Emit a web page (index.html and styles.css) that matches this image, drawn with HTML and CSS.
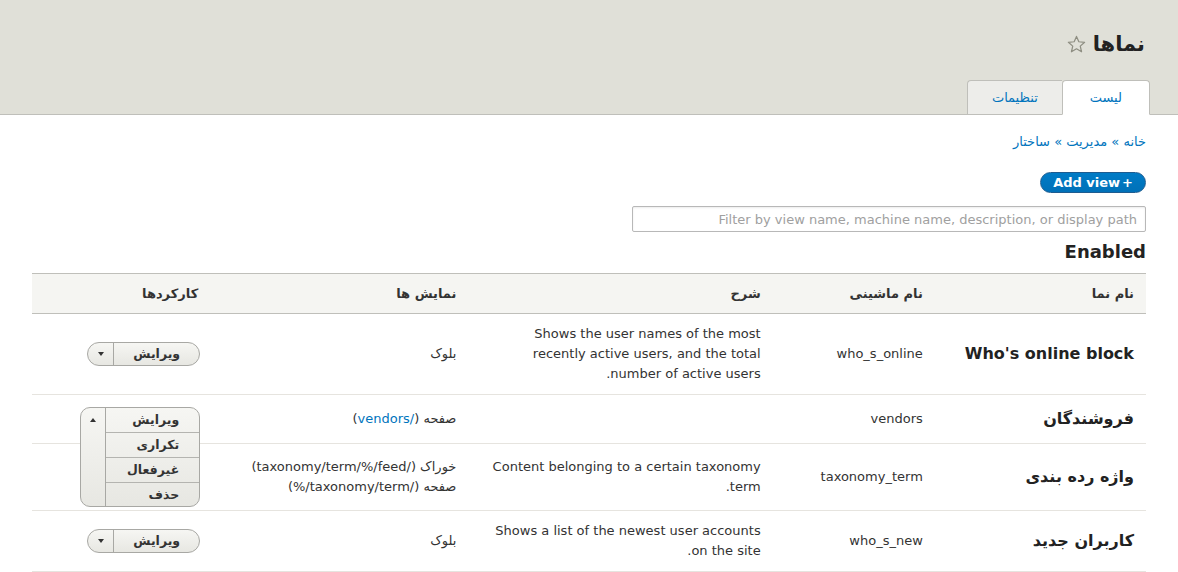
FILE: index.html
```html
<!DOCTYPE html>
<html lang="fa" dir="rtl">
<head>
<meta charset="utf-8">
<title>نماها</title>
<link rel="stylesheet" href="styles.css">
</head>
<body>
<header class="page-header">
  <div class="title-row">
    <h1 class="page-title">نماها</h1>
    <svg class="star" width="19" height="19" viewBox="0 0 20 20" aria-hidden="true"><path d="M10 1.5l2.47 5.6 6.08.56-4.6 4.02 1.36 5.96L10 14.530l-5.31 3.11 1.36-5.96-4.6-4.02 6.08-.56z" fill="none" stroke="#8e8e82" stroke-width="1.3" stroke-linejoin="round"/></svg>
  </div>
  <nav class="tabs">
    <a class="tab tab-active" href="#">لیست</a>
    <a class="tab" href="#">تنظیمات</a>
  </nav>
</header>
<main class="content">
  <div class="breadcrumb"><a href="#">خانه</a> » <a href="#">مدیریت</a> » <a href="#">ساختار</a></div>
  <div class="actions"><a class="button-primary" href="#"><span class="plus">+</span>Add view</a></div>
  <div class="filter-row"><input class="filter" type="search" placeholder="Filter by view name, machine name, description, or display path"></div>
  <h2 class="section-title">Enabled</h2>
  <table class="views-table">
    <colgroup>
      <col class="c-title"><col class="c-machine"><col class="c-desc"><col class="c-displays"><col class="c-ops">
    </colgroup>
    <thead>
      <tr><th>نام نما</th><th>نام ماشینی</th><th>شرح</th><th>نمایش ها</th><th>کارکردها</th></tr>
    </thead>
    <tbody>
      <tr class="r1">
        <td class="view-title">Who's online block</td>
        <td>who_s_online</td>
        <td><div class="desc">Shows the user names of the most recently active users, and the total number of active users.</div></td>
        <td>بلوک</td>
        <td class="ops"><div class="dropbutton"><a class="db-main" href="#">ویرایش</a><span class="db-toggle"><span class="tri tri-down"></span></span></div></td>
      </tr>
      <tr class="r2">
        <td class="view-title">فروشندگان</td>
        <td>vendors</td>
        <td><div class="desc"></div></td>
        <td>صفحه (<a href="#">/vendors</a>)</td>
        <td class="ops">
          <div class="db-holder">
            <div class="dropbutton dropbutton-open">
              <ul class="db-list">
                <li><a href="#">ویرایش</a></li>
                <li><a href="#">تکراری</a></li>
                <li><a href="#">غیرفعال</a></li>
                <li><a href="#">حذف</a></li>
              </ul>
              <span class="db-toggle db-toggle-open"><span class="tri tri-up"></span></span>
            </div>
          </div>
        </td>
      </tr>
      <tr class="r3">
        <td class="view-title">واژه رده بندی</td>
        <td>taxonomy_term</td>
        <td><div class="desc">Content belonging to a certain taxonomy term.</div></td>
        <td>خوراک (/taxonomy/term/%/feed)<br>صفحه (/taxonomy/term/%)</td>
        <td class="ops"></td>
      </tr>
      <tr class="r4">
        <td class="view-title">کاربران جدید</td>
        <td>who_s_new</td>
        <td><div class="desc">Shows a list of the newest user accounts on the site.</div></td>
        <td>بلوک</td>
        <td class="ops"><div class="dropbutton"><a class="db-main" href="#">ویرایش</a><span class="db-toggle"><span class="tri tri-down"></span></span></div></td>
      </tr>
    </tbody>
  </table>
</main>
</body>
</html>
```
FILE: styles.css
```css
html, body {
  margin: 0;
  padding: 0;
}
body {
  direction: rtl;
  font-family: "DejaVu Sans", "Noto Sans", sans-serif;
  font-size: 13px;
  line-height: 20px;
  color: #333;
  background: #fff;
}
a {
  color: #0074bd;
  text-decoration: none;
}

/* Header */
.page-header {
  background: #e0e0d8;
  border-bottom: 1px solid #bfbfba;
  height: 115px;
  box-sizing: border-box;
  padding: 30px 28px 0 28px;
  display: flex;
  flex-direction: column;
}
.title-row {
  display: flex;
  align-items: center;
  gap: 7px;
  padding-right: 5px;
  height: 28px;
}
.page-title {
  margin: 0;
  font-size: 21px;
  line-height: 28px;
  font-weight: bold;
  color: #222;
}
.star {
  display: block;
}
.tabs {
  margin-top: auto;
  display: flex;
  margin-bottom: -1px;
}
.tab {
  height: 35px;
  box-sizing: border-box;
  line-height: 33px;
  padding: 0 24px;
  background: #ededea;
  border: 1px solid #bfbfba;
  border-radius: 4px 4px 0 0;
  color: #0074bd;
}
.tab + .tab {
  border-right: none;
  border-radius: 4px 0 0 0;
}
.tab-active {
  background: #fff;
  border-bottom-color: #fff;
  padding: 0 27px;
  border-radius: 4px 4px 0 0;
}

/* Content */
.content {
  padding: 17px 32px 0 32px;
}
.breadcrumb {
  color: #0074bd;
  line-height: 20px;
}
.actions {
  margin-top: 20px;
  display: flex;
}
.button-primary {
  display: inline-flex;
  align-items: center;
  height: 21px;
  padding: 0 12px;
  border-radius: 12px;
  background: linear-gradient(to bottom, #007bc6, #0071b8);
  border: 1px solid #1e5c90;
  box-sizing: border-box;
  color: #fff;
  font-weight: bold;
  font-size: 13px;
  line-height: 19px;
}
.plus {
  font-weight: bold;
  margin-left: 2px;
}
.filter-row {
  margin-top: 13px;
  display: flex;
}
.filter {
  width: 514px;
  height: 26px;
  box-sizing: border-box;
  border: 1px solid #b8b8b8;
  border-radius: 2px;
  padding: 0 8px;
  font-family: "DejaVu Sans", sans-serif;
  font-size: 13px;
  direction: rtl;
  background: #fff;
  box-shadow: inset 0 1px 2px rgba(0,0,0,0.08);
}
.filter::placeholder {
  color: #a0a0a0;
}
.section-title {
  margin: 9px 0 10px;
  font-size: 18px;
  line-height: 22px;
  font-weight: bold;
  color: #222;
}

/* Table */
.views-table {
  width: 100%;
  border-collapse: collapse;
  table-layout: fixed;
  border-top: 1px solid #bfbfba;
}
.c-title { width: 211px; }
.c-machine { width: 162px; }
.c-desc { width: 304px; }
.c-displays { width: 258px; }
.c-ops { width: 178px; }
.views-table thead tr {
  background: #f5f5f2;
  border-bottom: 1px solid #bfbfba;
}
.views-table th {
  height: 40px;
  box-sizing: border-box;
  padding: 0 12px;
  text-align: right;
  font-weight: bold;
  font-size: 13px;
  color: #333;
}
.views-table td {
  padding: 10px 12px;
  text-align: right;
  vertical-align: middle;
  border-bottom: 1px solid #e6e4df;
}
.views-table td.ops {
  padding-right: 10px;
}
.r2 td { height: 48px; padding-top: 0; padding-bottom: 0; }
.r3 td { height: 66px; padding-top: 0; padding-bottom: 0; }
.r4 td { height: 60px; padding-top: 0; padding-bottom: 0; }
.view-title {
  font-size: 16px;
  font-weight: bold;
  color: #222;
}
.desc {
  max-width: 270px;
}

/* Dropbutton */
.dropbutton {
  display: inline-flex;
  height: 24px;
  box-sizing: border-box;
  border: 1px solid #a8a8a4;
  border-radius: 12px;
  overflow: hidden;
  background: linear-gradient(to bottom, #f6f6f3, #e7e7e2);
  vertical-align: middle;
}
.db-main {
  width: 85px;
  line-height: 22px;
  font-weight: bold;
  font-size: 12.5px;
  color: #333;
  text-align: center;
}
.db-toggle {
  width: 25px;
  border-right: 1px solid #a8a8a4;
  display: flex;
  align-items: center;
  justify-content: center;
}
.tri {
  width: 0;
  height: 0;
  border-left: 3.5px solid transparent;
  border-right: 3.5px solid transparent;
}
.tri-down {
  border-top: 4px solid #333;
}
.tri-up {
  border-bottom: 4px solid #333;
}
.db-holder {
  position: relative;
  height: 25px;
}
.dropbutton-open {
  position: absolute;
  top: 0;
  right: 0;
  height: auto;
  border-radius: 10px;
  z-index: 2;
}
.db-list {
  list-style: none;
  margin: 0;
  padding: 0;
}
.db-list li {
  height: 25px;
  box-sizing: border-box;
  border-bottom: 1px solid #b4b4b0;
}
.db-list li:last-child {
  border-bottom: none;
  height: 23px;
}
.db-list a {
  display: block;
  padding: 0 20px 0 20px;
  line-height: 24px;
  font-weight: bold;
  font-size: 12.5px;
  color: #333;
  text-align: right;
  width: 53px;
}
.db-toggle-open {
  align-items: flex-start;
  padding-top: 10px;
  box-sizing: border-box;
}
```
